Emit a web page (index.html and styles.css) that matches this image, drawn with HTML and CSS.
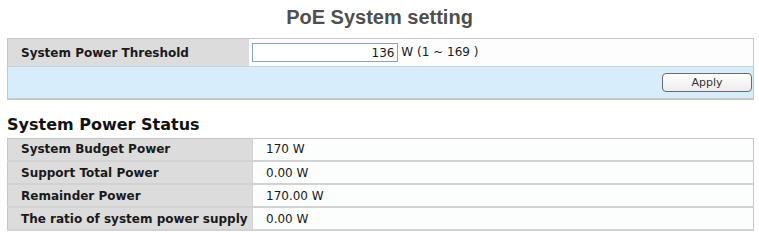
FILE: index.html
```html
<!DOCTYPE html>
<html lang="en">
<head>
  <meta charset="UTF-8">
  <title>PoE System setting</title>
  <link rel="stylesheet" href="styles.css">
</head>
<body>
  <h1 class="title">PoE System setting</h1>

  <table class="setting">
    <tr class="field-row">
      <td class="label">System Power Threshold</td>
      <td class="value">
        <input type="text" class="threshold" value="136"> W (1 ~ 169 )
      </td>
    </tr>
    <tr class="action-row">
      <td colspan="2"><button class="apply">Apply</button></td>
    </tr>
  </table>

  <h2 class="section">System Power Status</h2>

  <table class="status">
    <tr>
      <td class="label">System Budget Power</td>
      <td class="value">170 W</td>
    </tr>
    <tr>
      <td class="label">Support Total Power</td>
      <td class="value">0.00 W</td>
    </tr>
    <tr>
      <td class="label">Remainder Power</td>
      <td class="value">170.00 W</td>
    </tr>
    <tr>
      <td class="label">The ratio of system power supply</td>
      <td class="value">0.00 W</td>
    </tr>
  </table>
</body>
</html>
```

FILE: styles.css
```css
body {
  margin: 0;
  font-family: "DejaVu Sans", Verdana, sans-serif;
  font-size: 12px;
  color: #1a1a1a;
  background-color: #ffffff;
}
.title {
  margin: 0;
  padding-top: 6px;
  height: 38px;
  box-sizing: border-box;
  font-family: "Liberation Sans", Arial, sans-serif;
  font-size: 20px;
  line-height: 23px;
  font-weight: bold;
  color: #4f4f4f;
  text-align: center;
}
table {
  margin-left: 7px;
  width: 747px;
  border-collapse: collapse;
  table-layout: fixed;
}
td {
  box-sizing: border-box;
  padding: 0;
}
.setting {
  border: 1px solid #c6c6c6;
  border-bottom: 2px solid #c8c8c8;
}
.setting .label {
  width: 241px;
  height: 28px;
  padding-left: 13px;
  background-color: #dcdcdc;
  font-weight: bold;
  border-bottom: 1px solid #d0d0d0;
}
.setting .value {
  padding-left: 3px;
  background-color: #fdfdfd;
  border-bottom: 1px solid #d0d0d0;
}
.threshold {
  box-sizing: border-box;
  width: 146px;
  height: 19px;
  margin: 0;
  padding: 0 2px;
  border: 1px solid #8aa4c2;
  font-family: "DejaVu Sans", Verdana, sans-serif;
  font-size: 12px;
  color: #1a1a1a;
  text-align: right;
  vertical-align: middle;
}
.action-row td {
  height: 32px;
  padding-right: 1px;
  text-align: right;
  background-color: #d8edfb;
}
.apply {
  width: 90px;
  height: 19px;
  padding: 0;
  border: 1px solid #6b6b6b;
  border-radius: 4px;
  background: linear-gradient(#ffffff, #ececec);
  font-family: "DejaVu Sans", Verdana, sans-serif;
  font-size: 11px;
  color: #333333;
  cursor: pointer;
}
.section {
  margin: 15px 0 4px 7px;
  font-size: 16px;
  line-height: 19px;
  font-weight: bold;
  color: #111111;
}
.status {
  border: 1px solid #c6c6c6;
  border-bottom: 2px solid #c0c0c0;
}
.status td {
  height: 23px;
  border-bottom: 2px solid #d2d2d2;
}
.status .label {
  width: 245px;
  padding-left: 13px;
  background-color: #dcdcdc;
  font-weight: bold;
  white-space: nowrap;
}
.status .value {
  padding-left: 13px;
  background-color: #fcfdfd;
  border-left: 1px solid #d2d2d2;
}
```
